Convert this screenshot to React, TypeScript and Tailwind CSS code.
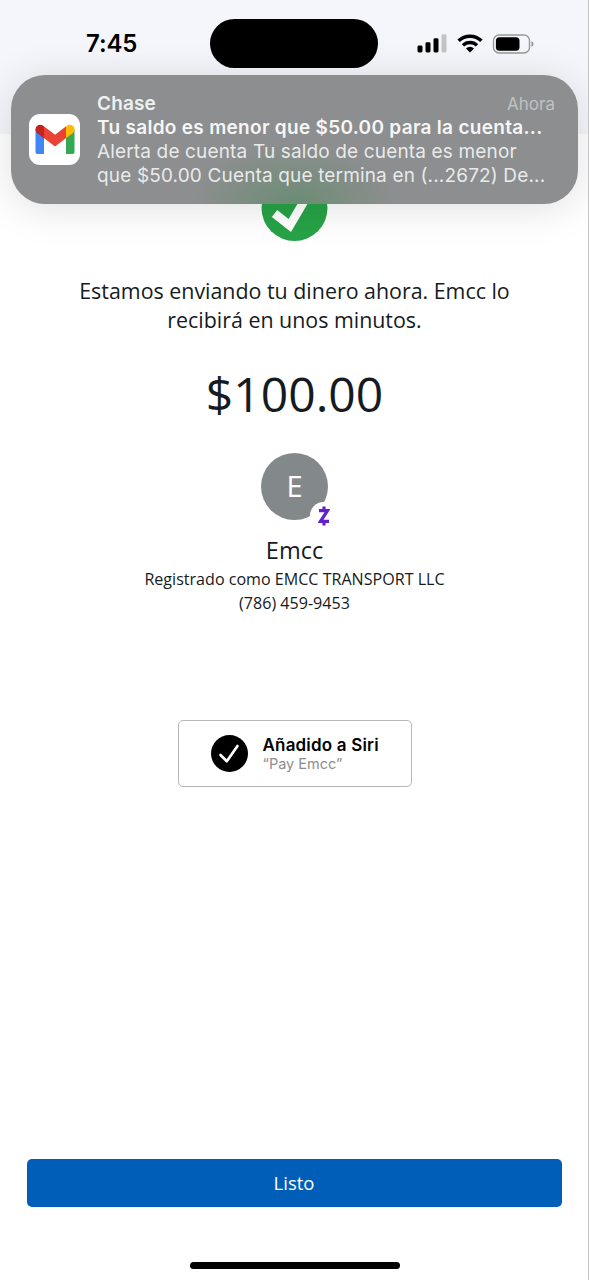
const paymentInfo = {
  message: "Estamos enviando tu dinero ahora. Emcc lo recibirá en unos minutos.",
  amount: "$100.00",
  recipient: "Emcc",
  registeredAs: "Registrado como EMCC TRANSPORT LLC",
  phone: "(786) 459-9453",
};

function SignalIcon() {
  return (
    <svg width="30" height="19" viewBox="0 0 30 19">
      <rect x="0.5" y="11.5" width="5" height="7" rx="1.4" fill="#000" />
      <rect x="8.5" y="8.3" width="5" height="10.2" rx="1.4" fill="#000" />
      <rect x="16.5" y="4.3" width="5" height="14.2" rx="1.4" fill="#000" />
      <rect x="24.5" y="0.3" width="5" height="18.2" rx="1.4" fill="#c3c4c8" />
    </svg>
  );
}

function WifiIcon() {
  return (
    <svg width="26" height="19" viewBox="0 0 26 19">
      <path d="M1.6 6.8a16.4 16.4 0 0 1 22.8 0" fill="none" stroke="#000" strokeWidth="3.6" />
      <path d="M6 11.4a10 10 0 0 1 14 0" fill="none" stroke="#000" strokeWidth="3.4" />
      <path d="M13 18.5l-4-4.1a5.7 5.7 0 0 1 8 0z" fill="#000" />
    </svg>
  );
}

function BatteryIcon() {
  return (
    <svg width="42" height="20" viewBox="0 0 42 20">
      <rect x="1.5" y="1" width="36" height="18" rx="5.6" fill="none" stroke="#97989c" strokeWidth="1.4" />
      <rect x="3.9" y="3.2" width="23.6" height="13.6" rx="3.6" fill="#000" />
      <path d="M39.4 7.2c1.4.5 2.1 1.5 2.1 2.8s-.7 2.3-2.1 2.8z" fill="#97989c" />
    </svg>
  );
}

function GmailIcon() {
  return (
    <div className="flex h-[51px] w-[51px] shrink-0 items-center justify-center rounded-[11px] bg-white">
      <svg width="40" height="31" viewBox="0 0 40 31">
        <path d="M0.5 5v23c0 1.3.7 2 2 2h6.5V9z" fill="#4285f4" />
        <path d="M39.5 5v23c0 1.3-.7 2-2 2H31V9z" fill="#34a853" />
        <path d="M8.5 2L20 10.8 31.5 2v11.8L20 22.6 8.5 13.8z" fill="#ea4335" />
        <path d="M0.5 5.5C.5 1.2 5-.5 8.2 1.800L9 2.4v11.8L2 8.9Q.5 7.700.5 5.500z" fill="#c5221f" />
        <path d="M39.5 5.5C39.5 1.2 35-.5 31.8 1.800L31 2.4v11.8l7-5.3q1.5-1.2 1.5-3.400z" fill="#fbbc04" />
      </svg>
    </div>
  );
}

function StatusBar() {
  return (
    <header className="flex h-[134px] items-start bg-[#f5f6fb] pt-[19px]">
      <div className="flex h-[49px] w-[210px] items-center pt-px pl-[86px] font-['Inter',sans-serif] text-[24px] font-semibold tracking-[-0.1px] text-black">
        7:45
      </div>
      <div className="h-[49px] w-[168px] rounded-full bg-black" />
      <div className="flex h-[49px] items-center pl-[39px]">
        <SignalIcon />
        <div className="ml-[10px]">
          <WifiIcon />
        </div>
        <div className="ml-[9px]">
          <BatteryIcon />
        </div>
      </div>
    </header>
  );
}

function NotificationBanner() {
  return (
    <div className="absolute top-[75px] left-[11px] flex h-[129px] w-[567px] items-center gap-[17px] rounded-[34px] bg-[#8c8e8f] bg-[radial-gradient(ellipse_100px_60px_at_50%_100%,#6a8c74_0%,#7b8d80_45%,#8c8e8f_100%)] pr-[23px] pl-[18px] font-['Inter',sans-serif] shadow-[0_4px_40px_rgba(0,0,0,0.13)]">
      <GmailIcon />
      <div className="min-w-0 flex-1 text-[19px] leading-6 tracking-[0.15px] whitespace-nowrap text-[#e9eaea]">
        <div className="flex justify-between">
          <span className="font-semibold text-[#eff0f0]">Chase</span>
          <span className="text-[17px] tracking-normal text-[#c0c2c3]">Ahora</span>
        </div>
        <p className="font-semibold tracking-[0.3px] text-[#f6f6f6]">Tu saldo es menor que $50.00 para la cuenta...</p>
        <p>Alerta de cuenta Tu saldo de cuenta es menor</p>
        <p>que $50.00 Cuenta que termina en (...2672) De...</p>
      </div>
    </div>
  );
}

function SuccessBadge() {
  return (
    <svg width="67" height="66" viewBox="0 0 67 66">
      <circle cx="33.5" cy="33" r="33" fill="#27a346" />
      <path d="M13.5 38.500L28.800 50.500L48.500 17" fill="none" stroke="#fff" strokeWidth="8.6" />
    </svg>
  );
}

function ZelleIcon() {
  return (
    <svg width="12" height="20" viewBox="0 0 12 20">
      <path d="M1 4.7H9.500L2.500 15.300H11M6 .5v4M6 15.500v4" fill="none" stroke="#6421c9" strokeWidth="3.2" />
    </svg>
  );
}

function Avatar() {
  return (
    <div className="relative flex h-[67px] w-[67px] items-center justify-center rounded-full bg-[#83888b] pb-0.5 text-[29px] text-white">
      E
      <div className="absolute top-[49px] left-[49px] flex h-[27px] w-[27px] items-center justify-center rounded-full bg-white">
        <ZelleIcon />
      </div>
    </div>
  );
}

function SiriButton() {
  return (
    <button className="flex h-[67px] w-[234px] items-center gap-[15px] rounded-[5px] border-[1.5px] border-[#b7b7b7] bg-white pl-8 text-left font-['Inter',sans-serif]">
      <svg width="37" height="37" viewBox="0 0 37 37">
        <circle cx="18.5" cy="18.5" r="18.5" fill="#000" />
        <path d="M9.5 20l6.3 6.3L26.5 11" fill="none" stroke="#fff" strokeWidth="2.7" strokeLinecap="round" strokeLinejoin="round" />
      </svg>
      <span className="flex flex-col whitespace-nowrap">
        <span className="text-[17px] leading-5 font-semibold tracking-[0.18px] text-black">Añadido a Siri</span>
        <span className="text-[14.5px] leading-[18px] text-[#8d8d8d]">“Pay Emcc”</span>
      </span>
    </button>
  );
}

export default function App() {
  return (
    <div className="relative flex h-[1280px] w-[589px] flex-col overflow-hidden border-r border-[#c4c4c6] bg-white font-['Open_Sans',sans-serif] text-[#151b22]">
      <StatusBar />

      <main className="flex flex-1 flex-col items-center pt-[41px] pl-px">
        <SuccessBadge />
        <p className="mt-[35px] w-[450px] text-center text-[21.4px] leading-[29px]">{paymentInfo.message}</p>
        <p className="mt-[26px] text-[48px] leading-[68px]">{paymentInfo.amount}</p>
        <div className="mt-[25px]">
          <Avatar />
        </div>
        <p className="mt-[14px] mb-px text-[23.5px] leading-8">{paymentInfo.recipient}</p>
        <p className="text-[16.080px] leading-6">{paymentInfo.registeredAs}</p>
        <p className="text-[16.080px] leading-6">{paymentInfo.phone}</p>
        <div className="mt-[105px]">
          <SiriButton />
        </div>
      </main>

      <footer className="flex flex-col items-center">
        <button className="h-12 w-[535px] rounded-[5px] bg-[#005eb8] text-[18.5px] font-medium text-white">Listo</button>
        <div className="mt-[55px] mb-[11px] ml-px h-[7px] w-[210px] rounded-full bg-black" />
      </footer>

      <NotificationBanner />
    </div>
  );
}
